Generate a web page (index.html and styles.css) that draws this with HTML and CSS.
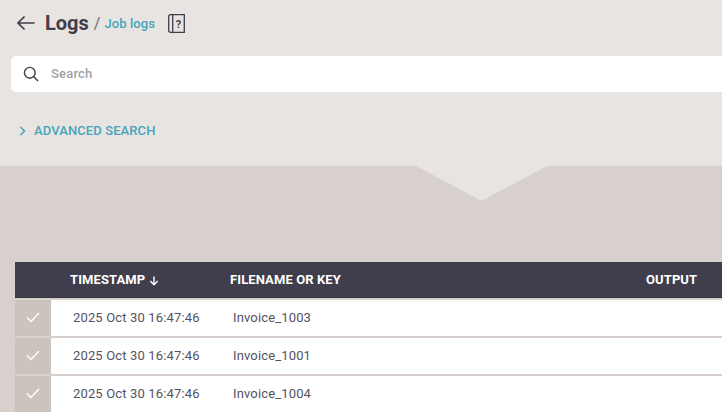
FILE: index.html
```html
<!DOCTYPE html>
<html lang="en">
<head>
<meta charset="utf-8">
<title>Job logs</title>
<link rel="stylesheet" href="styles.css">
</head>
<body>
<header class="top">
  <div class="crumbs">
    <svg class="back" width="20" height="16" viewBox="0 0 20 16"><path d="M18.500 8H2M8.500 1.500 2 8l6.500 6.500" fill="none" stroke="#403d4c" stroke-width="1.700"/></svg>
    <h1 class="title">Logs</h1>
    <span class="sep">/</span>
    <a class="sub">Job logs</a>
    <svg class="help" width="17" height="19" viewBox="0 0 17 19"><path d="M2.500.7h13.800v17.600H2.500A1.800 1.800 0 0 1 .7 16.500V2.500A1.800 1.800 0 0 1 2.500.7zM4.700.7v17.600" fill="none" stroke="#403d4c" stroke-width="1.300"/><text x="10.500" y="13.500" class="help-q">?</text></svg>
  </div>
  <div class="search">
    <svg width="16" height="16" viewBox="0 0 16 16"><circle cx="6.800" cy="6.800" r="5.400" fill="none" stroke="#403d4c" stroke-width="1.400"/><path d="m10.800 10.800 4.200 4.200" stroke="#403d4c" stroke-width="1.400"/></svg>
    <span class="placeholder">Search</span>
  </div>
  <div class="advanced">
    <svg width="8" height="10" viewBox="0 0 8 10"><path d="m1.500 1 4 4-4 4" fill="none" stroke="#45a5bb" stroke-width="1.500"/></svg>
    <span>ADVANCED SEARCH</span>
  </div>
</header>
<main class="main">
  <div class="notch"></div>
  <div class="table">
    <div class="row head">
      <div class="check"></div>
      <div class="ts">TIMESTAMP <svg class="arrow" width="10" height="10" viewBox="0 0 10 10"><path d="M5 .5v8M1.300 5 5 8.700 8.700 5" fill="none" stroke="#fff" stroke-width="1.400"/></svg></div>
      <div class="name">FILENAME OR KEY</div>
      <div class="out">OUTPUT</div>
    </div>
    <div class="row">
      <div class="check"><svg width="14" height="11" viewBox="0 0 14 11"><path d="m1 5.500 4 4L13 1" fill="none" stroke="#fff" stroke-width="1.400"/></svg></div>
      <div class="ts">2025 Oct 30 16:47:46</div>
      <div class="name">Invoice_1003</div>
    </div>
    <div class="row">
      <div class="check"><svg width="14" height="11" viewBox="0 0 14 11"><path d="m1 5.500 4 4L13 1" fill="none" stroke="#fff" stroke-width="1.400"/></svg></div>
      <div class="ts">2025 Oct 30 16:47:46</div>
      <div class="name">Invoice_1001</div>
    </div>
    <div class="row">
      <div class="check"><svg width="14" height="11" viewBox="0 0 14 11"><path d="m1 5.500 4 4L13 1" fill="none" stroke="#fff" stroke-width="1.400"/></svg></div>
      <div class="ts">2025 Oct 30 16:47:46</div>
      <div class="name">Invoice_1004</div>
    </div>
  </div>
</main>
</body>
</html>
```
FILE: styles.css
```css
* { box-sizing: border-box; }
html, body { margin: 0; height: 100%; overflow: hidden; }
body { font-family: Roboto, "Liberation Sans", sans-serif; background: #d8d0cc; color: #403d4c; }
.top { height: 166px; background: #e8e4e1; padding: 13px 0 0 11px; }
.crumbs { display: flex; align-items: center; height: 20px; padding-left: 5px; }
.back { margin-right: 9px; }
.title { margin: 0; font-size: 20px; line-height: 20px; font-weight: 700; color: #403d4c; }
.sep { margin-left: 5px; font-size: 16px; color: #6f6b76; }
.sub { margin-left: 4px; font-size: 13px; font-weight: 500; color: #45a5bb; letter-spacing: .1px; }
.help { margin-left: 13px; }
.help-q { font-size: 11px; font-weight: 700; fill: #403d4c; font-family: Roboto, sans-serif; text-anchor: middle; }
.search { display: flex; align-items: center; height: 36px; margin-top: 23px; padding-left: 12px; background: #fff; border-radius: 5px 0 0 5px; }
.placeholder { margin: 0 0 2px 12px; font-size: 13px; font-weight: 500; color: #a3a1a5; letter-spacing: .2px; }
.advanced { display: flex; align-items: center; gap: 7px; margin-top: 32px; padding-left: 8px; font-size: 13px; font-weight: 500; color: #45a5bb; letter-spacing: .1px; line-height: 14px; }
.main { padding: 96px 0 0 15px; position: relative; }
.notch { position: absolute; left: 416px; top: 0; width: 131px; height: 35px; background: #e8e4e1; clip-path: polygon(0 0, 100% 0, 50% 100%); }
.table { display: flex; flex-direction: column; gap: 2px; }
.row { display: flex; align-items: center; height: 36px; padding-bottom: 1px; background: #fff; font-size: 13px; color: #55525e; letter-spacing: .15px; }
.check { align-self: stretch; width: 36px; margin-bottom: -1px; padding-bottom: 1px; background: #cbc3be; display: flex; align-items: center; justify-content: center; }
.ts { width: 160px; padding-left: 22px; }
.name { padding-left: 22px; }
.head { background: #403d4c; color: #fff; font-size: 13px; font-weight: 700; letter-spacing: .1px; border-bottom: 1px solid #35323f; padding-bottom: 0; }
.head .check { background: none; }
.head .ts { width: 159px; padding-left: 19px; }
.head .name { padding-left: 20px; width: 436px; }
.arrow { margin-left: 0; vertical-align: -2px; }
```
